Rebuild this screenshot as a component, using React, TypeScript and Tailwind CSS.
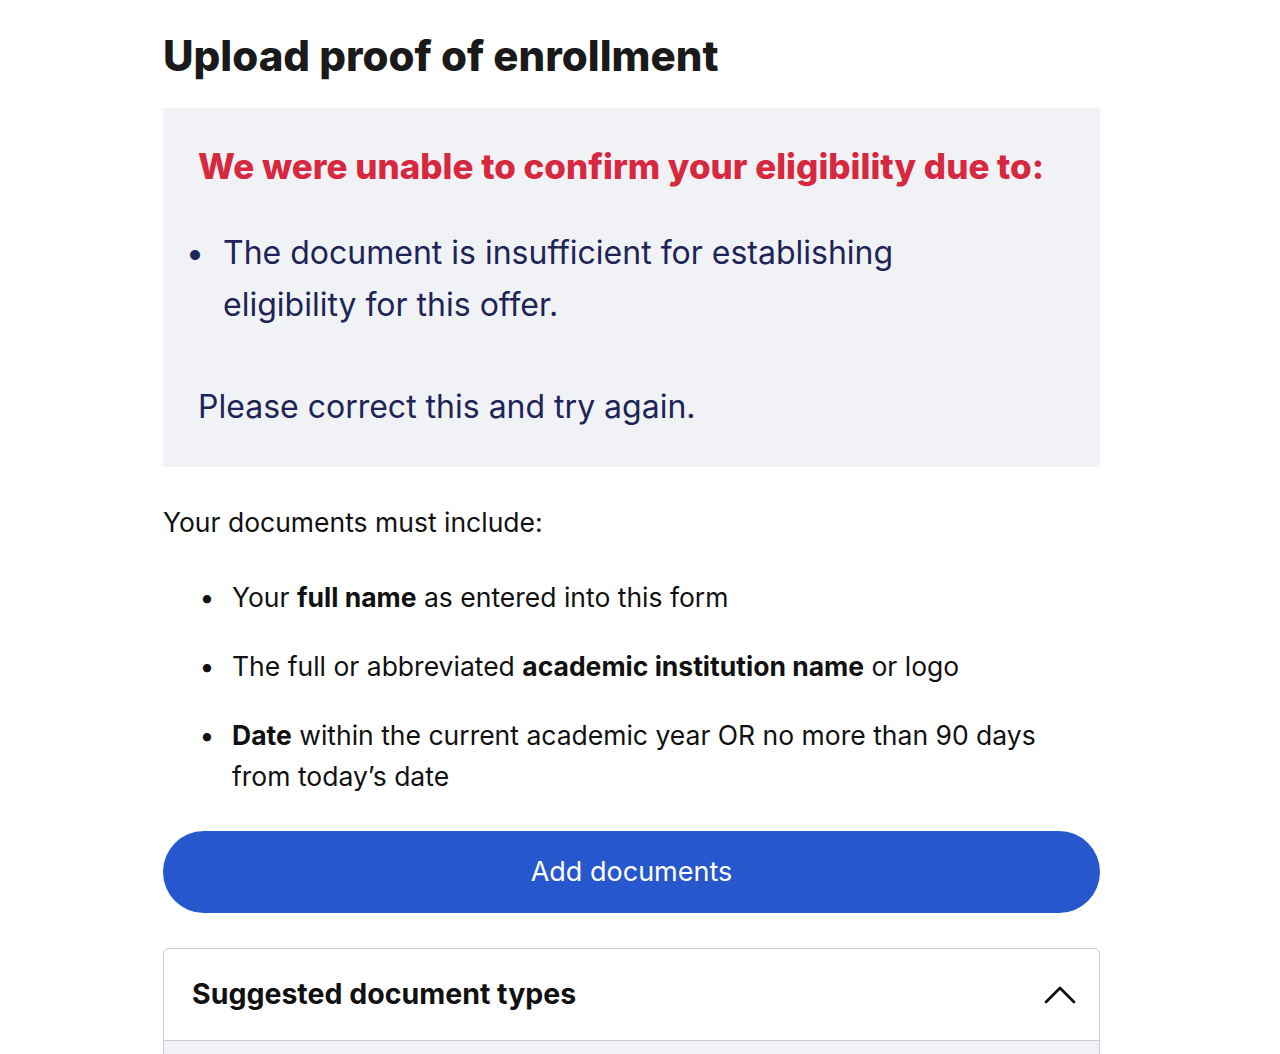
const requirements = [
  <>Your <strong className="font-bold">full name</strong> as entered into this form</>,
  <>The full or abbreviated <strong className="font-bold">academic institution name</strong> or logo</>,
  <><strong className="font-bold">Date</strong> within the current academic year OR no more than 90 days from today’s date</>,
];

function Chevron() {
  return (
    <svg width="32" height="19" viewBox="0 0 32 19" fill="none" stroke="#111" strokeWidth="2.8" strokeLinecap="round" strokeLinejoin="round">
      <polyline points="2,17 16,3 30,17" />
    </svg>
  );
}

export default function App() {
  return (
    <main className="min-h-screen bg-white font-['Inter',sans-serif]">
      <div className="ml-[163px] w-[937px] pt-[30px]">
        <h1 className="text-[42px] leading-[52px] font-extrabold text-[#1a1a1a]">
          Upload proof of enrollment
        </h1>

        <section className="mt-[26px] bg-[#f0f2f6] px-[35px] pt-[36px] pb-[34px]">
          <h2 className="text-[35px] leading-[44px] font-extrabold text-[#d6293f]">
            We were unable to confirm your eligibility due to:
          </h2>
          <ul className="mt-[39px] w-[720px] text-[32px] leading-[52px] text-[#1e2456]">
            <li className="flex">
              <span className="w-[26px] shrink-0 -ml-[16px] mr-[15px] text-center">•</span>
              <span>The document is insufficient for establishing eligibility for this offer.</span>
            </li>
          </ul>
          <p className="mt-[50px] text-[32px] leading-[52px] text-[#1e2456]">
            Please correct this and try again.
          </p>
        </section>

        <p className="mt-[37px] text-[26.5px] leading-[36px] text-[#111]">
          Your documents must include:
        </p>
        <ul className="mt-[37px] flex flex-col gap-[28px] text-[26.5px] leading-[41px] text-[#111]">
          {requirements.map((item, i) => (
            <li key={i} className="flex pl-[32px]">
              <span className="w-[24px] shrink-0 mr-[13px] text-center">•</span>
              <span className="w-[820px]">{item}</span>
            </li>
          ))}
        </ul>

        <button className="mt-[34px] flex h-[82px] w-full items-center justify-center rounded-full bg-[#2757cc] text-[27px] text-white">
          Add documents
        </button>

        <div className="mt-[35px] rounded-t-[6px] border border-[#c9ccd3]">
          <div className="flex h-[91px] items-center justify-between pl-[28px] pr-[23px]">
            <span className="text-[28.5px] font-bold text-[#111]">Suggested document types</span>
            <Chevron />
          </div>
          <div className="h-[40px] border-t border-[#c9ccd3] bg-[#f0f2f6]" />
        </div>
      </div>
    </main>
  );
}
